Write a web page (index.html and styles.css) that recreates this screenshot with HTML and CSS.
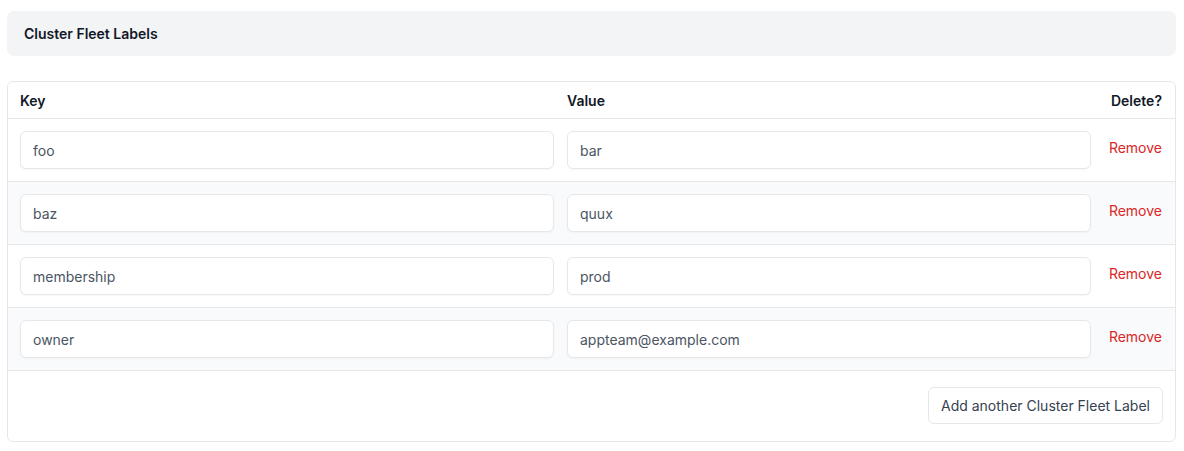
FILE: index.html
```html
<!DOCTYPE html>
<html>
<head>
<meta charset="utf-8">
<link rel="stylesheet" href="styles.css">
</head>
<body>
<div class="page">
  <div class="section-head">Cluster Fleet Labels</div>
  <div class="table">
    <div class="row head">
      <div class="th">Key</div>
      <div class="th">Value</div>
      <div class="th right">Delete?</div>
    </div>
    <div class="row">
      <input class="field" value="foo">
      <input class="field" value="bar">
      <a class="remove">Remove</a>
    </div>
    <div class="row alt">
      <input class="field" value="baz">
      <input class="field" value="quux">
      <a class="remove">Remove</a>
    </div>
    <div class="row">
      <input class="field" value="membership">
      <input class="field" value="prod">
      <a class="remove">Remove</a>
    </div>
    <div class="row alt">
      <input class="field" value="owner">
      <input class="field" value="appteam@example.com">
      <a class="remove">Remove</a>
    </div>
    <div class="foot">
      <button class="btn">Add another Cluster Fleet Label</button>
    </div>
  </div>
</div>
</body>
</html>
```
FILE: styles.css
```css
* { box-sizing: border-box; }
body { margin: 0; background: #fff; font-family: Inter, "Noto Sans", sans-serif; color: #111827; }
.page { padding: 11px 8px 0 7px; }
.section-head {
  background: #f3f4f6;
  border-radius: 7px;
  height: 45px;
  display: flex;
  align-items: center;
  padding-left: 17px;
  font-size: 14px;
  font-weight: 600;
  color: #111827;
}
.table {
  margin-top: 25px;
  border: 1px solid #e5e7eb;
  border-radius: 6px;
  overflow: hidden;
}
.row {
  display: grid;
  grid-template-columns: 534px 524px 1fr;
  column-gap: 13px;
  align-items: center;
  padding: 0 13px 0 12px;
  height: 63px;
  border-top: 1px solid #e5e7eb;
}
.row.head { height: 36px; border-top: none; }
.row.alt { background: #f9fafb; }
.th { font-size: 14px; font-weight: 600; color: #111827; }
.right { text-align: right; }
.field {
  height: 38px;
  width: 100%;
  border: 1px solid #e5e7eb;
  border-radius: 6px;
  background: #fff;
  padding: 0 12px;
  font-family: Inter, "Noto Sans", sans-serif;
  font-size: 14px;
  color: #4b5563;
  box-shadow: 0 1px 2px rgba(0,0,0,0.04);
  outline: none;
}
.remove {
  text-align: right;
  font-size: 14px;
  color: #dc2626;
  margin-top: -5px;
}
.foot {
  border-top: 1px solid #e5e7eb;
  height: 71px;
  display: flex;
  justify-content: flex-end;
  align-items: center;
  padding-right: 12px;
  padding-bottom: 2px;
}
.btn {
  height: 37px;
  padding: 0 12px;
  border: 1px solid #e5e7eb;
  border-radius: 6px;
  background: #fff;
  font-family: Inter, "Noto Sans", sans-serif;
  font-size: 14px;
  color: #374151;
}
```
